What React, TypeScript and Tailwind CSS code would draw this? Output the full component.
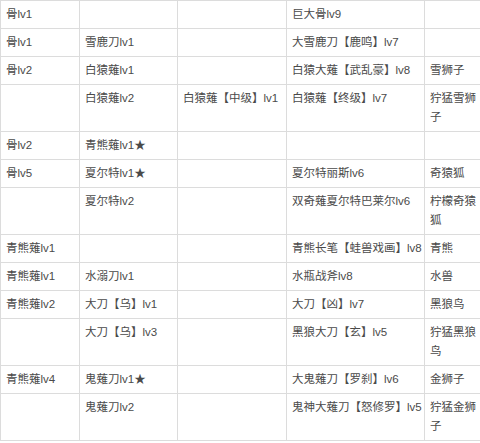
import React from "react";

const rows: string[][] = [
  ["骨lv1", "", "", "巨大骨lv9", ""],
  ["骨lv1", "雪鹿刀lv1", "", "大雪鹿刀【鹿鸣】lv7", ""],
  ["骨lv2", "白猿薙lv1", "", "白猿大薙【武乱豪】lv8", "雪狮子"],
  ["", "白猿薙lv2", "白猿薙【中级】lv1", "白猿薙【终级】lv7", "狞猛雪狮子"],
  ["骨lv2", "青熊薙lv1★", "", "", ""],
  ["骨lv5", "夏尔特lv1★", "", "夏尔特丽斯lv6", "奇猿狐"],
  ["", "夏尔特lv2", "", "双奇薙夏尔特巴莱尔lv6", "柠檬奇猿狐"],
  ["青熊薙lv1", "", "", "青熊长笔【蛙兽戏画】lv8", "青熊"],
  ["青熊薙lv1", "水溺刀lv1", "", "水瓶战斧lv8", "水兽"],
  ["青熊薙lv2", "大刀【乌】lv1", "", "大刀【凶】lv7", "黑狼鸟"],
  ["", "大刀【乌】lv3", "", "黑狼大刀【玄】lv5", "狞猛黑狼鸟"],
  ["青熊薙lv4", "鬼薙刀lv1★", "", "大鬼薙刀【罗刹】lv6", "金狮子"],
  ["", "鬼薙刀lv2", "", "鬼神大薙刀【怒修罗】lv5", "狞猛金狮子"],
];

const widths = ["w-[79px]", "w-[98px]", "w-[109px]", "w-[138px]", "w-[62px]"];

export default function App() {
  return (
    <div className="w-[480px] h-[443px] overflow-hidden bg-white">
      <table
        className="table-fixed border-collapse w-[486px] text-[11.5px] leading-[19px] text-[#4a4a4a]"
        style={{ fontFamily: '"Liberation Sans", "Noto Sans CJK SC", sans-serif' }}
      >
        <colgroup>
          {widths.map((w, i) => (
            <col key={i} className={w} />
          ))}
        </colgroup>
        <tbody>
          {rows.map((r, i) => (
            <tr key={i}>
              {r.map((c, j) => (
                <td
                  key={j}
                  className={
                    j === 4
                      ? "border border-[#dcdcdc] align-top pl-[5px] pr-[5px] py-[4px] break-all"
                      : "border border-[#dcdcdc] align-top pl-[5px] pr-[2px] py-[4px] whitespace-nowrap overflow-visible"
                  }
                >
                  {c}
                </td>
              ))}
            </tr>
          ))}
        </tbody>
      </table>
    </div>
  );
}
